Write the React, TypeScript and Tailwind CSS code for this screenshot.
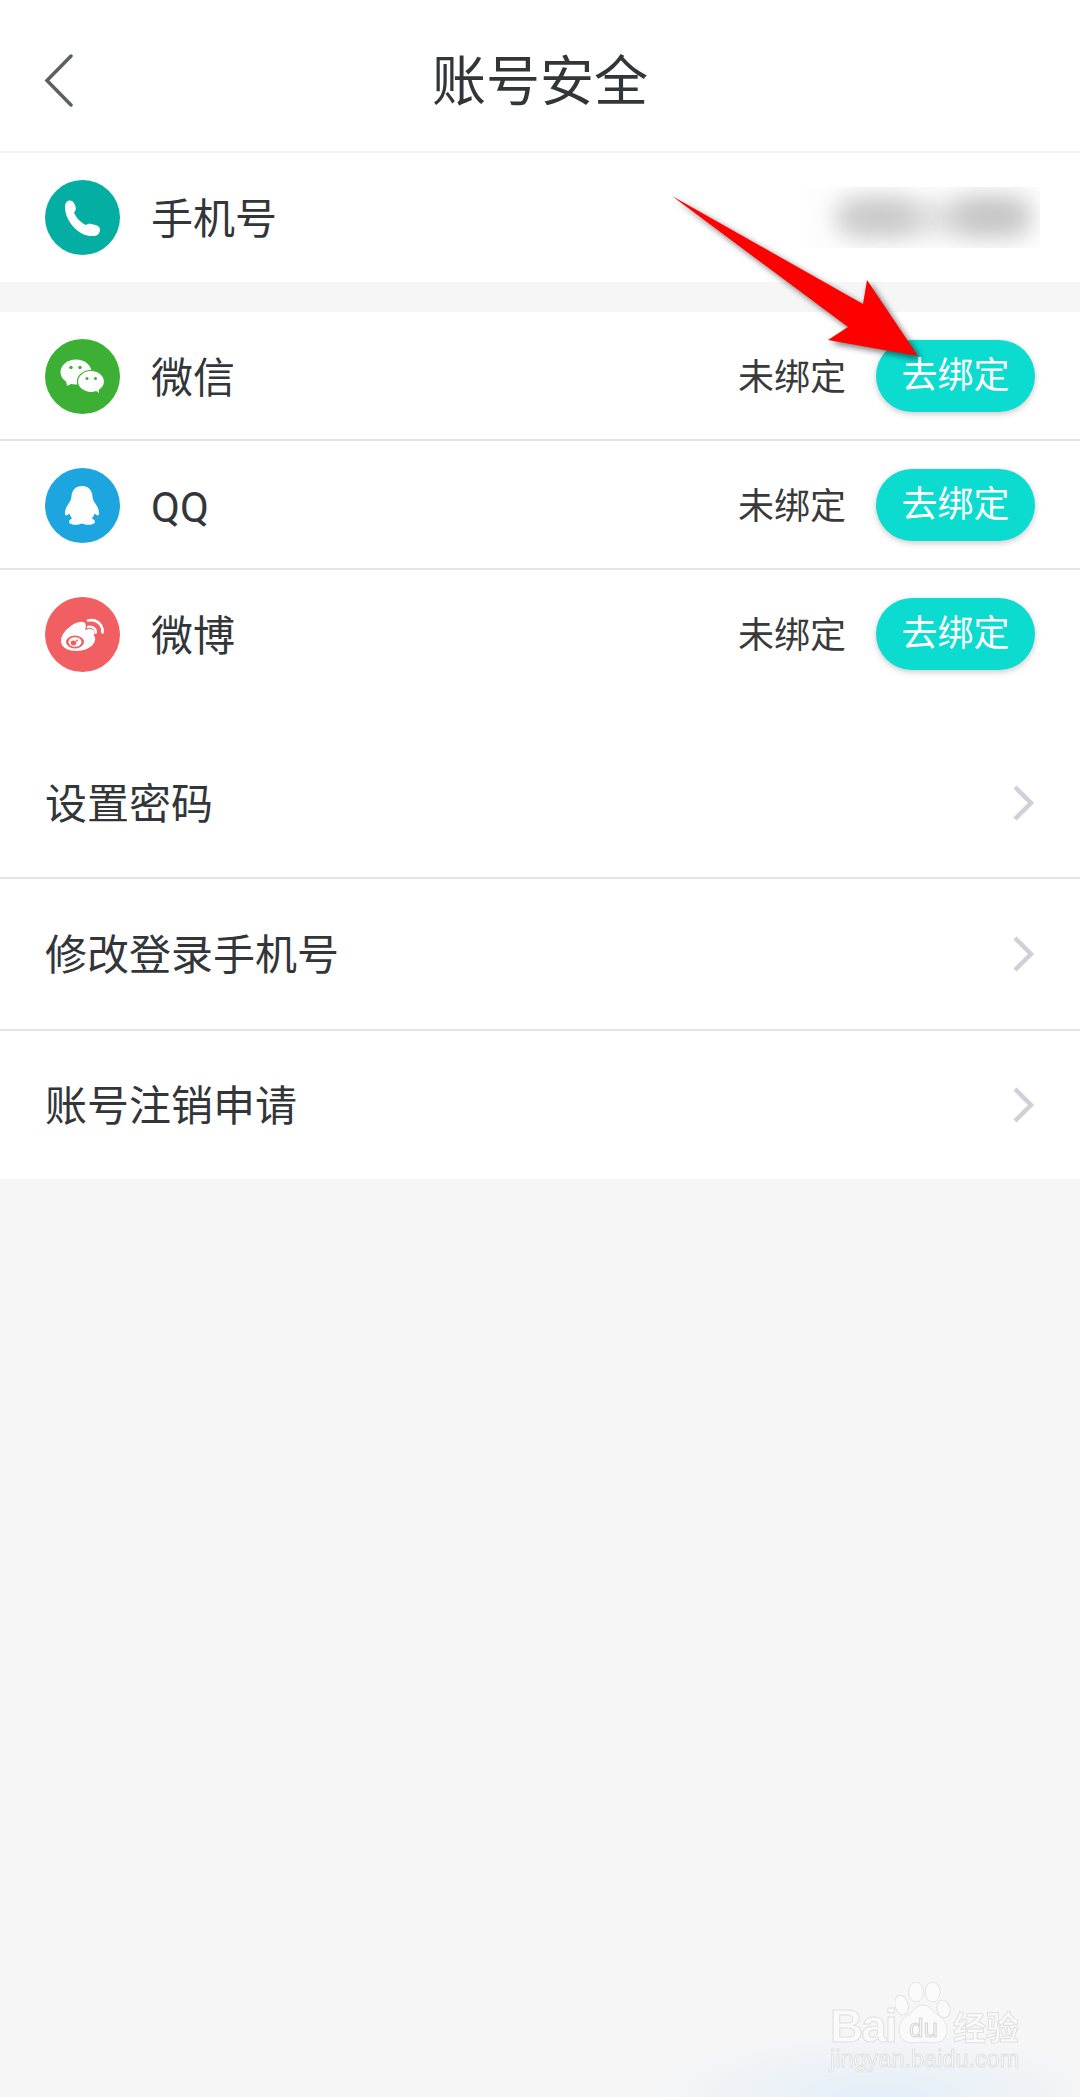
import { ReactNode } from "react";

const font = "font-['Roboto','Noto_Sans_CJK_SC',sans-serif]";

const PhoneIcon = () => (
  <svg viewBox="0 0 75 75" className="w-[75px] h-[75px]">
    <circle cx="37.5" cy="37.5" r="37.5" fill="#05aea3" />
    <path
      d="M20 27c0-4 2-6.500 5-6.500 3 0 4.500 3 5.500 6 .8 3 0 4.500-1.500 6 2 5 6.500 10 12 12.500 2-1.500 3.500-1.500 5.500-1 3 .8 8.500 1.500 8.500 5.500 0 3-2 6.500-6 6.500-7 .5-14-2-20-8.500-5.500-6-9-13-9-20.500z"
      fill="#fff"
    />
  </svg>
);

const WechatIcon = () => (
  <svg viewBox="0 0 75 75" className="w-[75px] h-[75px]">
    <circle cx="37.5" cy="37.5" r="37.5" fill="#3cb035" />
    <ellipse cx="31" cy="33" rx="15.5" ry="12.5" fill="#fff" />
    <path d="M21 42l1 5 6-3z" fill="#fff" />
    <circle cx="26" cy="28.5" r="1.7" fill="#3cb035" />
    <circle cx="35" cy="28.5" r="1.7" fill="#3cb035" />
    <ellipse cx="46" cy="42.5" rx="13.5" ry="11" fill="#fff" stroke="#3cb035" strokeWidth="1.2" />
    <path d="M50 51l4 3-.5-5z" fill="#fff" />
    <circle cx="42" cy="39.5" r="1.5" fill="#3cb035" />
    <circle cx="50.5" cy="39.5" r="1.5" fill="#3cb035" />
  </svg>
);

const QQIcon = () => (
  <svg viewBox="0 0 75 75" className="w-[75px] h-[75px]">
    <circle cx="37.5" cy="37.5" r="37.5" fill="#1ca5de" />
    <path
      d="M37 18c-6 0-10 4-10.500 10-.2 3-1 5-2.500 7-2 3-4.500 7-4 11 .3 2 2 2 4.500-.5.5 2 1.500 3.500 2.500 5-2.500 1-3.500 3-2.500 4.500 1.500 2 8 2.500 12.500.5 4.500 2 11 1.500 12.500-.5 1-1.500 0-3.500-2.500-4.500 1-1.500 2-3 2.500-5 2.500 2.500 4.200 2.500 4.500.5.500-4-2-8-4-11-1.500-2-2.300-4-2.500-7-.5-6-4.500-10-10-10z"
      fill="#fff"
    />
  </svg>
);

const WeiboIcon = () => (
  <svg viewBox="0 0 75 75" className="w-[75px] h-[75px]">
    <circle cx="37.5" cy="37.5" r="37.5" fill="#f25f62" />
    <path
      d="M16 44c0-6 5-12 12-16.500 6-3.500 11.500-3.500 12.500-.5.600 2 .2 4-.5 6 4-1.500 8.500-1.500 9.500 1.500.4 1.500-.3 3-.8 4 1.300 1 1.800 3 1.300 5-1.500 6.500-11 10.500-18 10.500-8 0-16-3-16-10z"
      fill="#fff"
    />
    <ellipse cx="30" cy="45" rx="9" ry="6.5" fill="#f25f62" />
    <ellipse cx="30" cy="45" rx="6.5" ry="4.8" fill="#fff" />
    <ellipse cx="28.5" cy="46" rx="2.8" ry="2.4" fill="#f25f62" />
    <circle cx="32" cy="43.5" r="1" fill="#f25f62" />
    <path d="M43 23.500c5-1 10 .5 13 5 1.500 2.500 1.800 4.500 1.500 7" fill="none" stroke="#fff" strokeWidth="2.6" strokeLinecap="round" />
    <path d="M43 30c3-.5 5.500 0 7 2 .8 1 1 2.300.8 3.500" fill="none" stroke="#fff" strokeWidth="2.4" strokeLinecap="round" />
  </svg>
);

const Chevron = () => (
  <svg viewBox="0 0 22 36" className="w-[22px] h-[36px]">
    <path d="M2 2l16 16L2 34" fill="none" stroke="#d0d0d9" strokeWidth="4.5" />
  </svg>
);

const BindRow = ({ icon, name, divider }: { icon: ReactNode; name: string; divider?: boolean }) => (
  <div className={`flex items-center h-[129px] px-[45px] ${divider ? "pt-[2px] border-b-2 border-[#e5e5e5]" : ""}`}>
    {icon}
    <span className="ml-[31px] pt-[4px] text-[42px] text-[#333639] flex-1">{name}</span>
    <span className="pt-[2px] text-[36px] text-[#3a3a3a]">未绑定</span>
    <button className="ml-[30px] mb-[2px] w-[159px] h-[72px] rounded-full bg-[#0cdbcf] text-white text-[36px] shadow-[0_2px_6px_rgba(0,0,0,0.22)]">
      去绑定
    </button>
  </div>
);

const MenuRow = ({ label, height, divider }: { label: string; height: string; divider?: boolean }) => (
  <div className={`flex items-center justify-between px-[45px] ${height} ${divider ? "border-b-2 border-[#e5e5e5]" : ""}`}>
    <span className="pt-[2px] text-[42px] text-[#333639]">{label}</span>
    <Chevron />
  </div>
);

const Watermark = () => (
  <div className="absolute left-[830px] top-[1982px] w-[200px] h-[100px] font-['Liberation_Sans',sans-serif]">
    <svg viewBox="0 0 60 65" className="absolute left-[65px] top-0 w-[60px] h-[65px] blur-[0.4px]">
      <g fill="#fafafa" stroke="#e2e2e2" strokeWidth="1">
        <ellipse cx="6.5" cy="23" rx="6.5" ry="10" transform="rotate(-15 6.5 23)" />
        <ellipse cx="21" cy="10" rx="7.5" ry="10" />
        <ellipse cx="37.5" cy="10" rx="7.5" ry="10" />
        <ellipse cx="48.5" cy="27" rx="6.5" ry="9" transform="rotate(-15 48.5 27)" />
        <path d="M28 23c-7 0-9 6-15 10-9 6-12 16-6 24 5 5 12 4 21 3 9 1 16 2 21-3 6-8 3-18-6-24-6-4-8-10-15-10z" />
      </g>
    </svg>
    <span className="absolute left-0 top-[23px] text-[46px] leading-[42px] font-bold tracking-[-2px] text-[#fafafa] blur-[0.4px] [-webkit-text-stroke:1px_#e0e0e0]">
      Bai
    </span>
    <span className="absolute left-[79px] top-[32px] text-[26px] leading-[28px] text-[#f4f4f4] blur-[0.4px] [-webkit-text-stroke:1px_#d6d6d6]">
      du
    </span>
    <span className="absolute left-[123px] top-[23px] text-[33px] leading-[42px] font-bold text-[#fafafa] blur-[0.4px] font-['Noto_Sans_CJK_SC',sans-serif] [-webkit-text-stroke:1px_#e0e0e0]">
      经验
    </span>
    <span className="absolute left-0 top-[65px] text-[23.5px] leading-[24px] text-[#fafafa] whitespace-nowrap blur-[0.4px] [-webkit-text-stroke:1px_#e0e0e0]">
      jingyan.baidu.com
    </span>
  </div>
);

export default function App() {
  return (
    <div className={`relative w-[1080px] h-[2097px] overflow-hidden bg-[#f6f6f6] ${font}`}>
      <div className="flex items-center justify-center relative h-[153px] pt-[13px] bg-white border-b-2 border-[#f3f3f3]">
        <svg viewBox="0 0 30 54" className="absolute left-[44px] top-[54px] w-[30px] h-[54px]">
          <path d="M27 2L3 26.5 27 51" fill="none" stroke="#5c6060" strokeWidth="3.5" strokeLinecap="round" />
        </svg>
        <h1 className="text-[54px] text-[#333639] font-normal">账号安全</h1>
      </div>

      <div className="flex items-center justify-between h-[129px] pl-[45px] bg-white">
        <div className="flex items-center">
          <PhoneIcon />
          <span className="ml-[31px] pt-[4px] text-[42px] text-[#333639]">手机号</span>
        </div>
        <div className="relative mr-[40px] w-[233px] h-[61px] overflow-hidden bg-[#fdfdfd]">
          <div className="absolute left-[30px] top-[16px] w-[190px] h-[30px] rounded-full bg-[#dcdcdc] blur-[12px]" />
          <div className="absolute left-[34px] top-[14px] w-[76px] h-[32px] rounded-full bg-[#c8c8c8] blur-[12px]" />
          <div className="absolute left-[146px] top-[12px] w-[76px] h-[34px] rounded-full bg-[#c4c4c4] blur-[12px]" />
        </div>
      </div>

      <div className="mt-[30px] bg-white h-[417px]">
        <BindRow icon={<WechatIcon />} name="微信" divider />
        <BindRow icon={<QQIcon />} name="QQ" divider />
        <BindRow icon={<WeiboIcon />} name="微博" />
      </div>

      <div className="bg-white">
        <MenuRow label="设置密码" height="h-[150px]" divider />
        <MenuRow label="修改登录手机号" height="h-[152px]" divider />
        <MenuRow label="账号注销申请" height="h-[148px]" />
      </div>

      {/* red annotation arrow */}
      <svg viewBox="0 0 1080 500" className="absolute left-0 top-0 w-[1080px] h-[500px] drop-shadow-[3px_3px_3px_rgba(0,0,0,0.55)]">
        <path d="M672 196L863 304 867 280 918 356 828 340 848 327z" fill="#ff0000" />
      </svg>

      <div className="absolute left-[640px] top-[2030px] w-[480px] h-[67px] bg-[radial-gradient(ellipse_at_50%_100%,#e3eef8_0%,transparent_70%)]" />
      <Watermark />
    </div>
  );
}
